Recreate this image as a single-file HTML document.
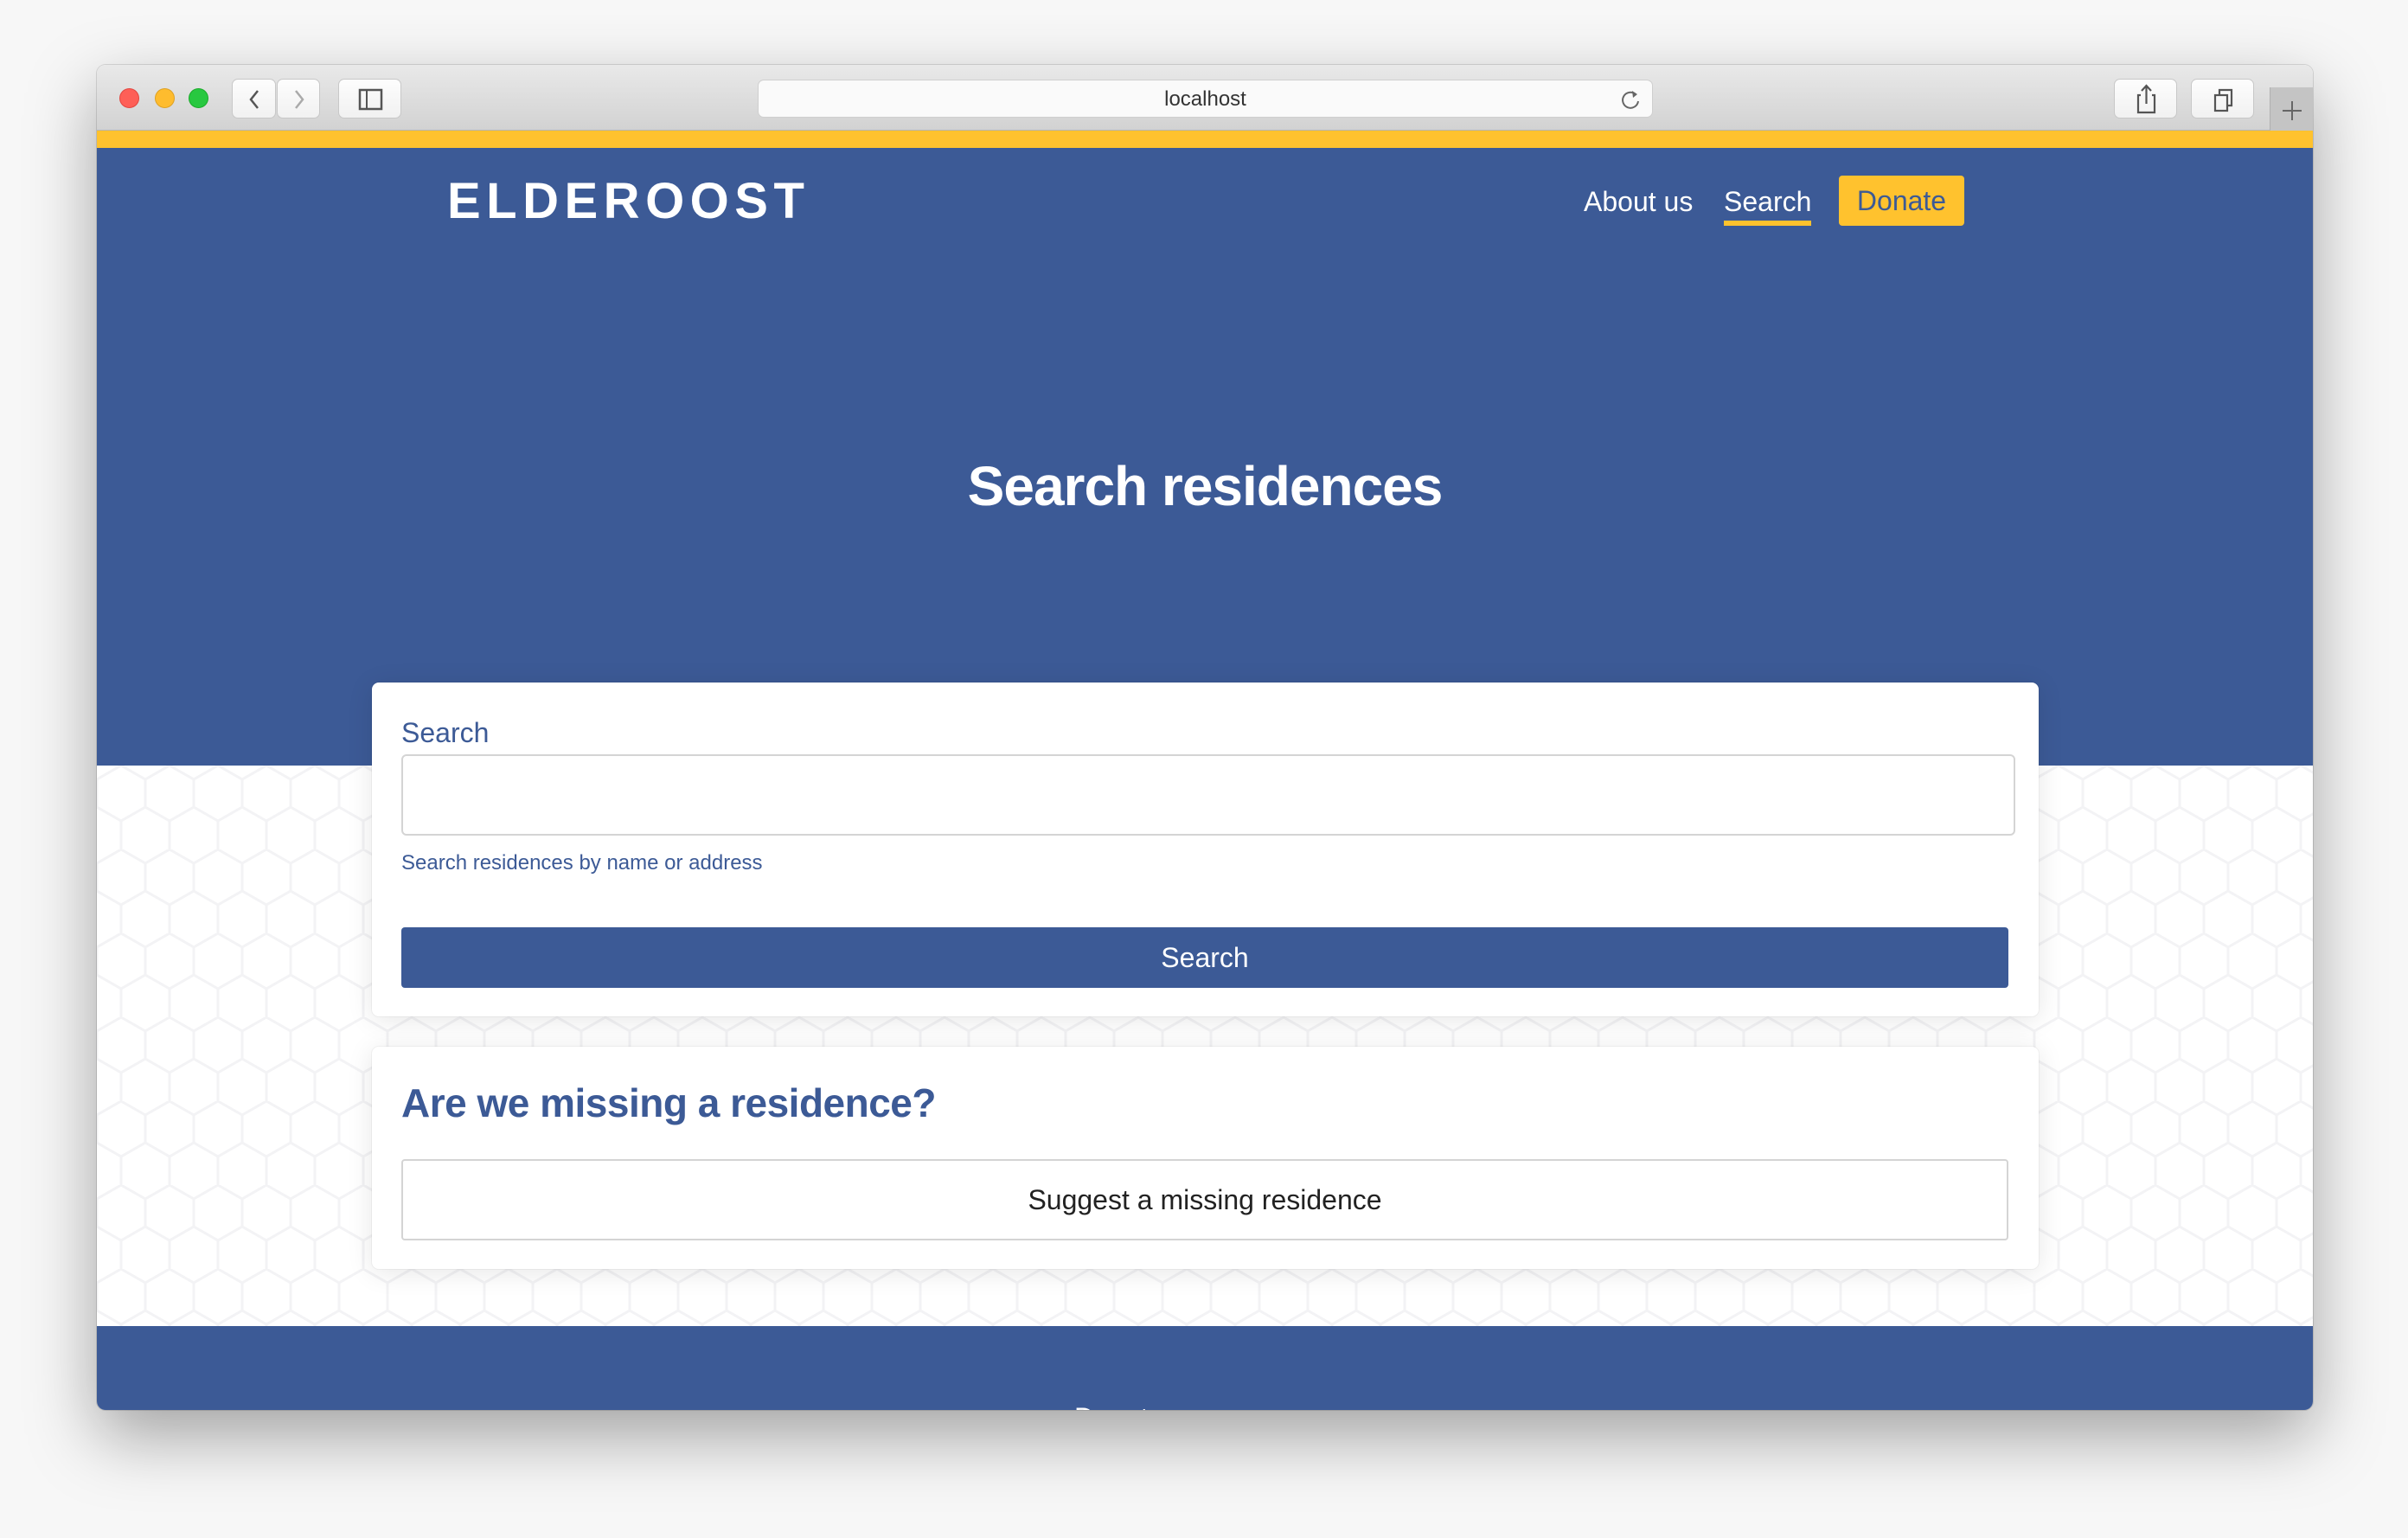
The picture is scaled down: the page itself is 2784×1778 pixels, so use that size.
<!DOCTYPE html>
<html><head><meta charset="utf-8"><style>
*{margin:0;padding:0;box-sizing:border-box}
body{width:2784px;height:1778px;background:#f7f7f7;font-family:"Liberation Sans",sans-serif;position:relative;overflow:hidden}
.win{position:absolute;left:112px;top:75px;width:2562px;height:1555px;border-radius:10px;overflow:hidden;box-shadow:0 30px 80px rgba(0,0,0,.35),0 0 0 1px rgba(0,0,0,.12);background:#fff}
.tb{position:absolute;left:0;top:0;width:100%;height:76px;background:linear-gradient(#e9e9e9,#d2d2d2);border-bottom:1px solid #b5b5b5}
.dot{position:absolute;top:27px;width:23px;height:23px;border-radius:50%}
.btn{position:absolute;top:16px;height:46px;background:linear-gradient(#fdfdfd,#f1f1f1);border:1px solid #c8c8c8;border-radius:7px}
.url{position:absolute;left:764px;top:17px;width:1035px;height:44px;background:#fafafa;border:1px solid #cfcfcf;border-radius:7px;text-align:center;font-size:24px;line-height:44px;color:#333}
.yel{position:absolute;left:0;top:76px;width:100%;height:20px;background:#ffc22e}
.hero{position:absolute;left:0;top:96px;width:100%;height:714px;background:#3c5a96}
.hex{position:absolute;left:0;top:810px;width:100%;height:648px;background:#fff}
.foot{position:absolute;left:0;top:1458px;width:100%;height:97px;background:#3c5a96;overflow:hidden}
.logo{position:absolute;left:405px;top:27px;color:#fff;font-weight:bold;font-size:58px;letter-spacing:6.5px;line-height:70px}
.nav{position:absolute;top:44px;color:#fff;font-size:32px;line-height:36px}
.card{position:absolute;left:318px;width:1927px;background:#fff;border-radius:8px;box-shadow:0 4px 30px rgba(0,0,0,.10),0 0 0 1px rgba(0,0,0,.04)}
.blue{color:#3c5a96}
</style></head><body>
<div class="win">
 <div class="tb">
  <div class="dot" style="left:26px;background:#fe5f57;border:1px solid #e2463f"></div>
  <div class="dot" style="left:67px;background:#febc2e;border:1px solid #dea123"></div>
  <div class="dot" style="left:106px;background:#28c840;border:1px solid #1aab29"></div>
  <div class="btn" style="left:156px;width:51px"><svg width="51" height="46"><path d="M29 13 L21 23 L29 33" stroke="#555" stroke-width="2.5" fill="none"/></svg></div>
  <div class="btn" style="left:208px;width:50px"><svg width="50" height="46"><path d="M21 13 L29 23 L21 33" stroke="#aaa" stroke-width="2.5" fill="none"/></svg></div>
  <div class="btn" style="left:279px;width:73px"><svg width="73" height="46"><rect x="24" y="12" width="25" height="22" fill="none" stroke="#555" stroke-width="2.5"/><line x1="32" y1="12" x2="32" y2="34" stroke="#555" stroke-width="2"/></svg></div>
  <div class="url">localhost<svg style="position:absolute;right:12px;top:10px" width="24" height="26"><path d="M17 6 A9 9 0 1 0 20 14" stroke="#666" stroke-width="2" fill="none"/><path d="M13 2 L19 6 L14 10" fill="#666"/></svg></div>
  <div class="btn" style="left:2332px;width:73px"><svg width="73" height="46"><path d="M30 18 H27 V38 H46 V18 H43 M36.5 28 V8 M31 13 L36.5 7 L42 13" stroke="#555" stroke-width="2.2" fill="none"/></svg></div>
  <div class="btn" style="left:2421px;width:73px"><svg width="73" height="46"><rect x="27" y="18" width="14" height="18" fill="none" stroke="#555" stroke-width="2.2"/><path d="M32 18 V12 H46 V30 H41" stroke="#555" stroke-width="2.2" fill="none"/></svg></div>
  <div style="position:absolute;left:2512px;top:26px;width:50px;height:52px;background:#c4c4c4;border-left:1px solid #b0b0b0"><svg width="50" height="52"><path d="M25 16 V38 M14 27 H36" stroke="#666" stroke-width="2"/></svg></div>
 </div>
 <div class="yel"></div>
 <div class="hero">
  <div class="logo">ELDEROOST</div>
  <div class="nav" style="left:1719px">About us</div>
  <div class="nav" style="left:1881px">Search<div style="height:6px;background:#ffc22e;margin-top:4px;width:101px"></div></div>
  <div style="position:absolute;left:2014px;top:32px;width:145px;height:58px;background:#ffc22e;border-radius:4px;color:#3c5a96;font-size:32px;line-height:58px;text-align:center">Donate</div>
  <div style="position:absolute;left:0;width:100%;top:353px;text-align:center;color:#fff;font-weight:bold;font-size:64px;letter-spacing:-1px;line-height:76px">Search residences</div>
 </div>
 <div class="hex">
  <svg width="2564" height="648" style="position:absolute;left:0;top:0"><defs><pattern id="h" width="56" height="97" patternUnits="userSpaceOnUse"><path d="M28 0 L56 16 V48 L28 64 L0 48 V16 Z M28 64 V97" stroke="#f3f3f5" stroke-width="3" fill="none"/></pattern></defs><rect width="2564" height="648" fill="url(#h)"/></svg>
 </div>
 <div class="foot"><div style="position:absolute;left:1130px;top:88px;color:#fff;font-size:32px">Donate</div></div>
 <div class="card" style="top:714px;height:386px">
  <div class="blue" style="position:absolute;left:34px;top:40px;font-size:32px">Search</div>
  <div style="position:absolute;left:34px;top:83px;width:1866px;height:94px;border:2px solid #d4d4d4;border-radius:6px"></div>
  <div class="blue" style="position:absolute;left:34px;top:195px;font-size:24px">Search residences by name or address</div>
  <div style="position:absolute;left:34px;top:283px;width:1858px;height:70px;background:#3c5a96;border-radius:4px;color:#fff;font-size:32px;line-height:70px;text-align:center">Search</div>
 </div>
 <div class="card" style="top:1135px;height:257px">
  <div class="blue" style="position:absolute;left:34px;top:38px;font-size:46px;font-weight:bold;letter-spacing:-.5px">Are we missing a residence?</div>
  <div style="position:absolute;left:34px;top:130px;width:1858px;height:94px;border:2px solid #d4d4d4;border-radius:4px;color:#222;font-size:32px;line-height:90px;text-align:center">Suggest a missing residence</div>
 </div>
</div>
</body></html>
